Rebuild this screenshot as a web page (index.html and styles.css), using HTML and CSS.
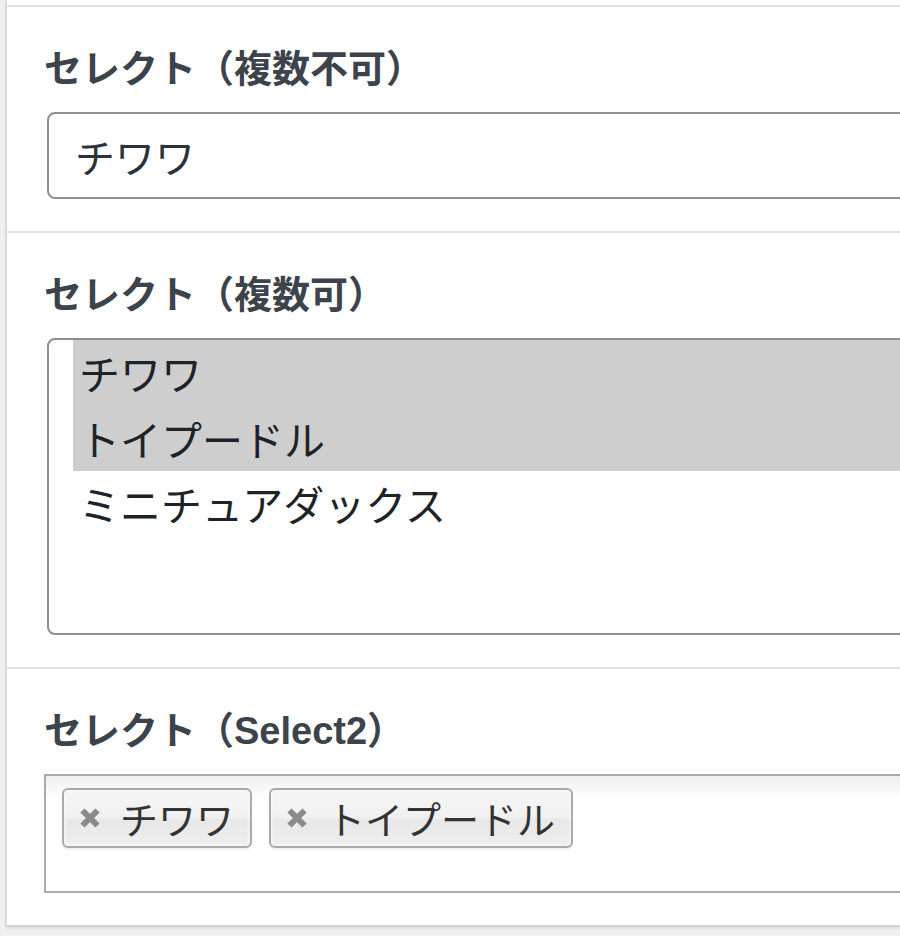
FILE: index.html
```html
<!DOCTYPE html>
<html lang="ja">
<head>
<meta charset="utf-8">
<title>セレクト</title>
<link rel="stylesheet" href="styles.css">
</head>
<body>
<div class="panel">
  <div class="top-strip"></div>

  <section class="field">
    <div class="label">セレクト（複数不可）</div>
    <div class="select-single">チワワ</div>
  </section>

  <section class="field">
    <div class="label">セレクト（複数可）</div>
    <div class="select-multi" role="listbox">
      <div class="option selected">チワワ</div>
      <div class="option selected">トイプードル</div>
      <div class="option">ミニチュアダックス</div>
    </div>
  </section>

  <section class="field last">
    <div class="label">セレクト（Select2）</div>
    <div class="select2">
      <div class="choice">
        <svg class="remove" viewBox="0 0 20 20" width="20" height="20"><path d="M2.5 2.5 L17.5 17.5 M17.5 2.5 L2.5 17.5"/></svg>
        <span>チワワ</span>
      </div>
      <div class="choice">
        <svg class="remove" viewBox="0 0 20 20" width="20" height="20"><path d="M2.5 2.5 L17.5 17.5 M17.5 2.5 L2.5 17.5"/></svg>
        <span>トイプードル</span>
      </div>
    </div>
  </section>
</div>
</body>
</html>
```

FILE: styles.css
```css
html, body {
  margin: 0;
  padding: 0;
}

body {
  background: #f0f0f1;
  height: 936px;
  overflow: hidden;
  font-family: "Liberation Sans", "Noto Sans CJK JP", sans-serif;
}

.panel {
  margin-left: 5px;
  background: #fff;
  border-left: 2px solid #dcdcde;
  border-bottom: 2px solid #d4d4d6;
  box-shadow: 0 2px 2px rgba(0, 0, 0, 0.06);
  overflow: hidden;
}

.top-strip {
  height: 5px;
  border-bottom: 2px solid #e2e2e3;
}

.field {
  padding: 40px 0 32px 40px;
  border-bottom: 2px solid #e2e2e3;
}

.field.last {
  border-bottom: none;
}

.label {
  height: 44px;
  line-height: 44px;
  margin: 0 0 21px -3px;
  font-size: 38px;
  font-weight: 700;
  color: #3c434a;
  white-space: nowrap;
}

.select-single {
  width: 1000px;
  height: 87px;
  box-sizing: border-box;
  border: 2px solid #8c8f94;
  border-radius: 8px;
  padding-left: 26px;
  display: flex;
  align-items: center;
  font-family: "Noto Sans CJK JP", sans-serif;
  font-size: 40px;
  color: #2c3338;
}

.select-multi {
  width: 1000px;
  height: 297px;
  box-sizing: border-box;
  border: 2px solid #8c8f94;
  border-radius: 8px;
  padding-left: 24px;
  font-family: "Noto Sans CJK JP", sans-serif;
  font-size: 41px;
  color: #1d2327;
}

.option {
  height: 65.5px;
  line-height: 65.5px;
  padding-left: 6px;
  white-space: nowrap;
}

.option.selected {
  background: #cecece;
}

.select2 {
  width: 1000px;
  height: 119px;
  margin-left: -3px;
  box-sizing: border-box;
  border: 2px solid #aaa;
  background: linear-gradient(to bottom, #f0f0f0 1%, #fff 20%);
  padding: 12px 0 0 16px;
  display: flex;
  align-items: flex-start;
  gap: 17px;
}

.choice {
  height: 60px;
  box-sizing: border-box;
  display: flex;
  align-items: center;
  gap: 20px;
  padding: 0 16px 0 16px;
  border: 2px solid #aaa;
  border-radius: 6px;
  background: linear-gradient(to bottom, #f4f4f4 20%, #f0f0f0 50%, #e8e8e8 52%, #eee 100%);
  box-shadow: inset 0 0 4px #fff, 0 2px 0 rgba(0, 0, 0, 0.05);
  font-family: "Noto Sans CJK JP", sans-serif;
  font-size: 38px;
  color: #333;
  white-space: nowrap;
}

.choice span {
  line-height: 56px;
}

.remove {
  display: block;
  flex: none;
}

.remove path {
  stroke: #8a8a8a;
  stroke-width: 6;
  stroke-linecap: butt;
  fill: none;
}
```
